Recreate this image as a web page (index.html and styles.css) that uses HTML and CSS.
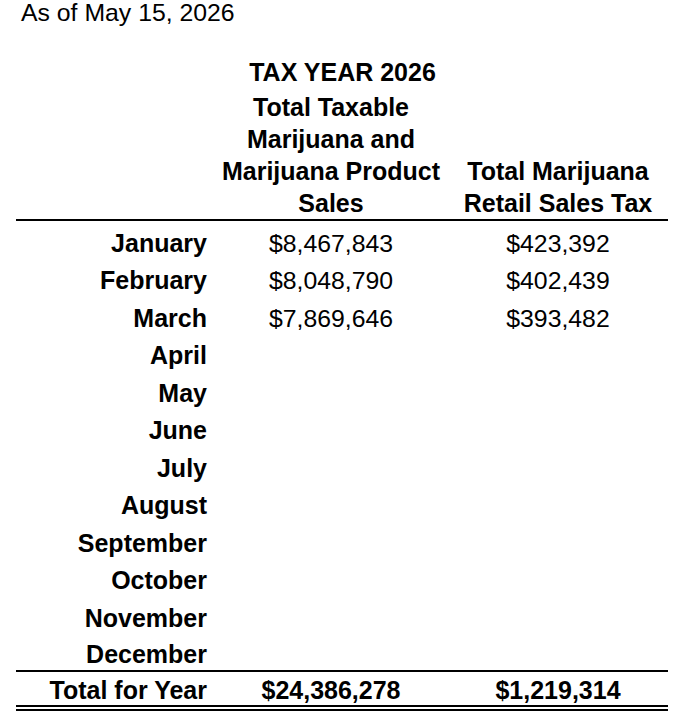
FILE: index.html
```html
<!DOCTYPE html>
<html lang="en">
<head>
<meta charset="utf-8">
<title>Tax Year 2026</title>
<link rel="stylesheet" href="styles.css">
</head>
<body>
<div class="page">
  <p class="asof">As of May 15, 2026</p>
  <table class="report">
    <colgroup>
      <col class="c-month">
      <col class="c-sales">
      <col class="c-tax">
    </colgroup>
    <thead>
      <tr class="year-row">
        <th></th>
        <th class="year">TAX YEAR 2026</th>
        <th></th>
      </tr>
      <tr class="head-row">
        <th></th>
        <th>Total Taxable<br>Marijuana and<br>Marijuana Product<br>Sales</th>
        <th>Total Marijuana<br>Retail Sales Tax</th>
      </tr>
    </thead>
    <tbody>
      <tr class="first"><th>January</th><td>$8,467,843</td><td>$423,392</td></tr>
      <tr><th>February</th><td>$8,048,790</td><td>$402,439</td></tr>
      <tr><th>March</th><td>$7,869,646</td><td>$393,482</td></tr>
      <tr><th>April</th><td></td><td></td></tr>
      <tr><th>May</th><td></td><td></td></tr>
      <tr><th>June</th><td></td><td></td></tr>
      <tr><th>July</th><td></td><td></td></tr>
      <tr><th>August</th><td></td><td></td></tr>
      <tr><th>September</th><td></td><td></td></tr>
      <tr><th>October</th><td></td><td></td></tr>
      <tr><th>November</th><td></td><td></td></tr>
      <tr class="last"><th>December</th><td></td><td></td></tr>
    </tbody>
    <tfoot>
      <tr class="total-row"><th>Total for Year</th><td>$24,386,278</td><td>$1,219,314</td></tr>
    </tfoot>
  </table>
</div>
</body>
</html>
```

FILE: styles.css
```css
html, body {
  margin: 0;
  padding: 0;
  background: #ffffff;
}

body {
  font-family: "Liberation Sans", Arial, sans-serif;
  font-size: 24.8px;
  color: #000000;
}

.page {
  padding-left: 16px;
}

.asof {
  margin: 0;
  padding-left: 5px;
  line-height: 26px;
  font-weight: normal;
}

.report {
  margin-top: 30px;
  width: 652px;
  table-layout: fixed;
  border-collapse: separate;
  border-spacing: 0;
}

.c-month { width: 198px; }
.c-sales { width: 234px; }
.c-tax { width: 220px; }

.report th,
.report td {
  padding: 0;
  white-space: nowrap;
}

.report th {
  font-size: 25px;
}

.report thead th {
  font-weight: bold;
  text-align: center;
  line-height: 32px;
}

.report .year {
  padding-left: 23px;
}

.report .head-row th {
  padding-top: 3px;
  vertical-align: bottom;
  border-bottom: 2px solid #000000;
}

.report tbody th,
.report tfoot th {
  font-weight: bold;
  text-align: right;
  padding-right: 7px;
}

.report tbody td {
  text-align: center;
  font-weight: normal;
}

.report tbody tr th,
.report tbody tr td {
  line-height: 37.5px;
}

.report tbody tr.first th,
.report tbody tr.first td {
  padding-top: 3.6px;
}

.report tbody tr.last th,
.report tbody tr.last td {
  line-height: 31px;
  padding-top: 2px;
  border-bottom: 2px solid #000000;
}

.report tfoot th,
.report tfoot td {
  line-height: 29px;
  padding-top: 4px;
  border-bottom: 6px double #000000;
}

.report tfoot td {
  font-size: 25px;
  font-weight: bold;
  text-align: center;
}
```
